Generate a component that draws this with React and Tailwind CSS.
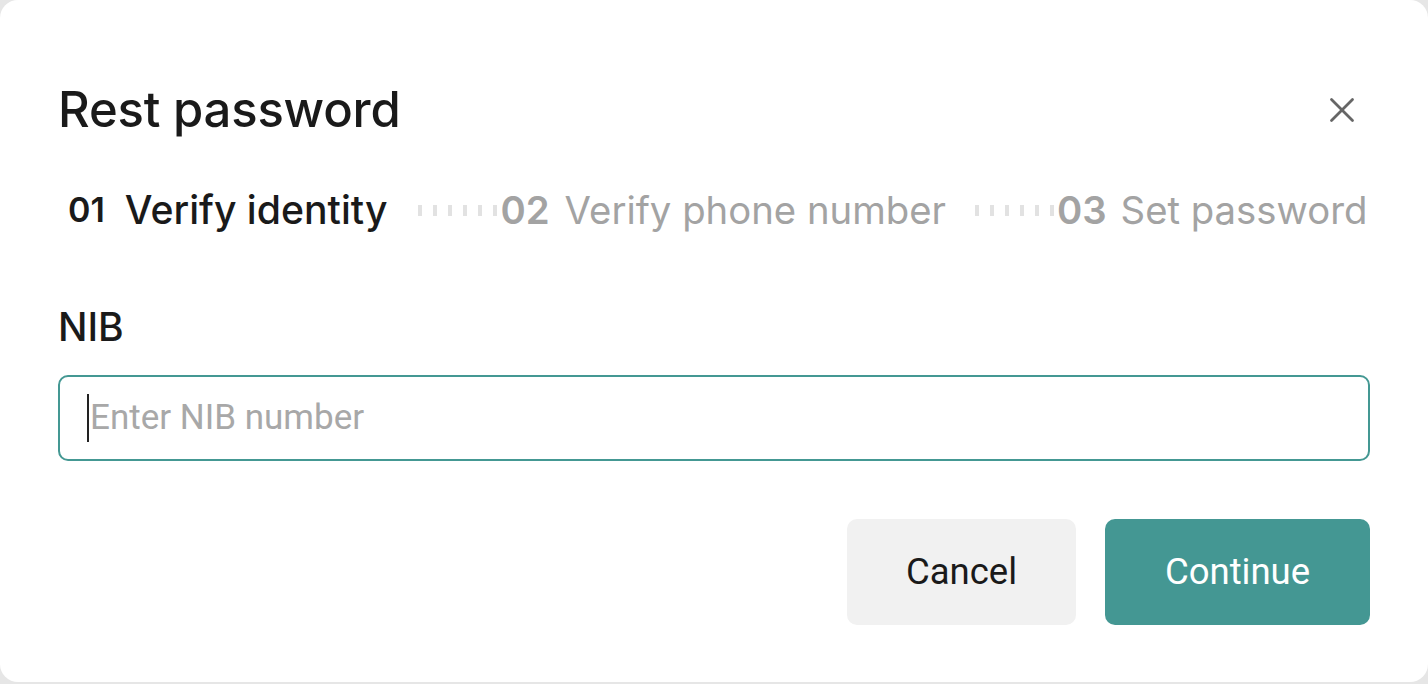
import { X } from "lucide-react";

const Ticks = () => (
  <div className="flex shrink-0 items-center gap-[11px]">
    {[0, 1, 2, 3, 4, 5].map((i) => (
      <span key={i} className="block h-[11px] w-[4px] bg-[#e2e2e2]" />
    ))}
  </div>
);

export default function App() {
  return (
    <div className="h-[684px] w-full bg-[#e6e6e6] font-['Inter',sans-serif]">
      <div className="flex h-[682px] flex-col rounded-[18px] bg-white px-[58px] pt-[84px]">
        <div className="flex h-[52px] items-center justify-between">
          <h1 className="text-[49px] font-medium leading-[52px] tracking-[-0.2px] text-[#1a1a1a]">
            Rest password
          </h1>
          <X className="mr-[7px] h-[42px] w-[42px] text-[#666]" strokeWidth={1.6} />
        </div>

        <div className="mt-[52px] flex h-[44px] items-center whitespace-nowrap pl-[10px] text-[38.3px] leading-[44px]">
          <span className="text-[34px] font-semibold text-[#1a1a1a]">01</span>
          <span className="ml-[20px] text-[39.2px] font-medium text-[#1a1a1a]">Verify identity</span>
          <div className="ml-[31px] mr-[3px]">
            <Ticks />
          </div>
          <span className="font-semibold text-[#a3a3a3]">02</span>
          <span className="ml-[15px] text-[#a3a3a3]">Verify phone number</span>
          <div className="ml-[29px] mr-[3px]">
            <Ticks />
          </div>
          <span className="font-semibold text-[#a3a3a3]">03</span>
          <span className="ml-[14px] text-[#a3a3a3]">Set password</span>
        </div>

        <label className="mt-[75px] text-[39px] font-medium leading-[40px] text-[#1a1a1a]">
          NIB
        </label>

        <div className="mt-[28px] flex h-[86px] items-center rounded-[10px] border-2 border-[#449893] px-[27px]">
          <span className="h-[48px] w-[2px] bg-[#222]" />
          <span className="ml-[1px] font-['Roboto',sans-serif] text-[35px] text-[#a8a8a8]">
            Enter NIB number
          </span>
        </div>

        <div className="mt-[58px] flex justify-end gap-[29px] font-['Roboto',sans-serif] text-[36.5px]">
          <button className="h-[106px] w-[229px] rounded-[10px] bg-[#f1f1f1] text-[#1a1a1a]">
            Cancel
          </button>
          <button className="h-[106px] w-[265px] rounded-[10px] bg-[#449793] text-white">
            Continue
          </button>
        </div>
      </div>
    </div>
  );
}
